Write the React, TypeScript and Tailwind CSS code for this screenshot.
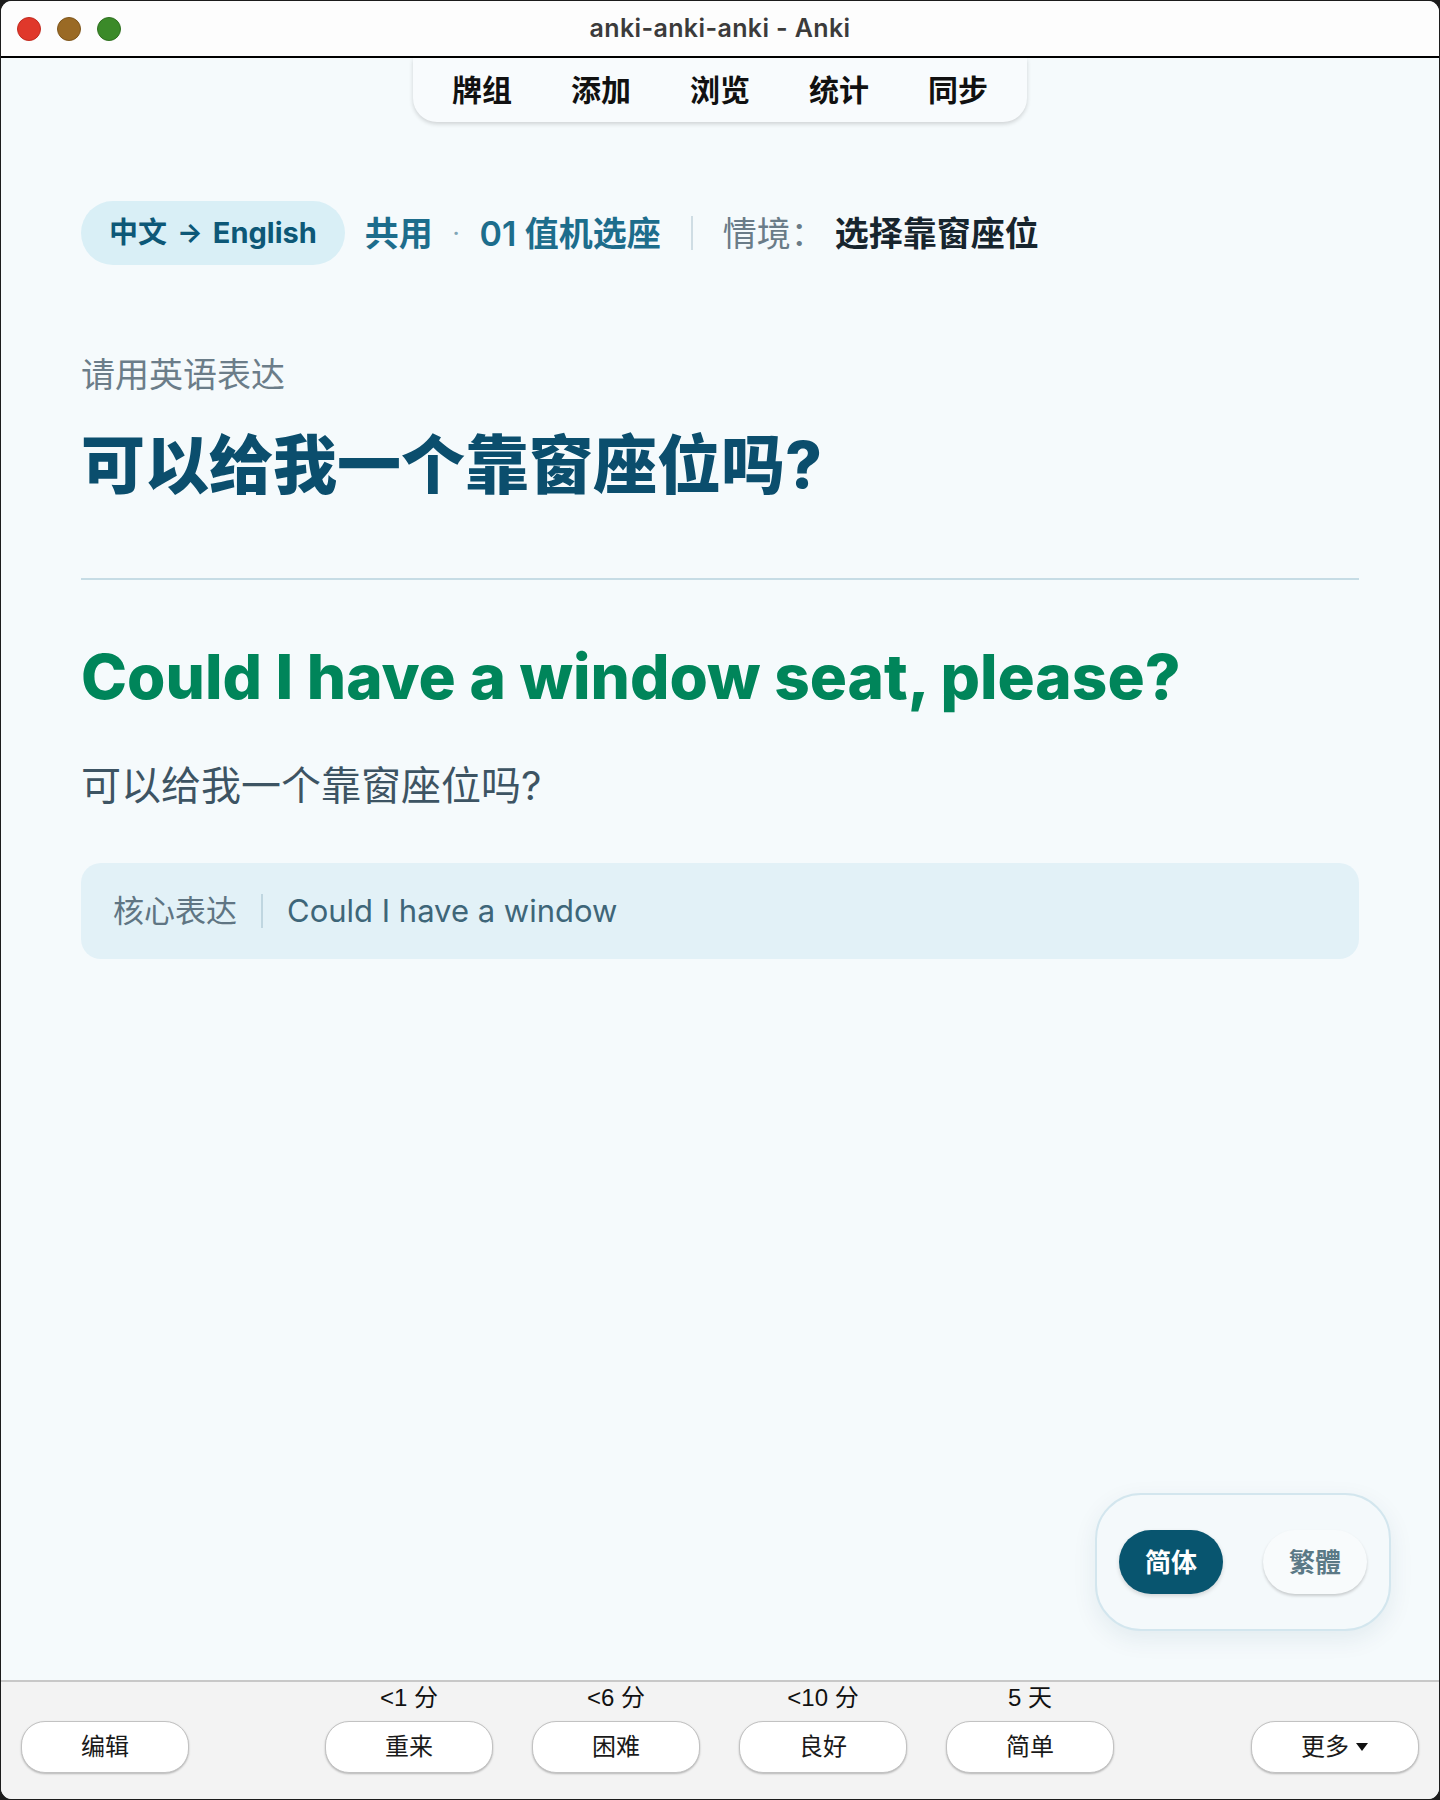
import { ReactNode } from "react";

const tabs = ["牌组", "添加", "浏览", "统计", "同步"];

const answers = [
  { due: "<1 分", label: "重来" },
  { due: "<6 分", label: "困难" },
  { due: "<10 分", label: "良好" },
  { due: "5 天", label: "简单" },
];

const BarButton = ({ children }: { children: ReactNode }) => (
  <button className="flex h-[52px] w-[168px] items-center justify-center gap-[6px] rounded-[24px] border border-[#c2c2c2] bg-white text-[24px] leading-none text-[#1a1a1a] shadow-[0_1px_2px_rgba(0,0,0,0.25)]">
    {children}
  </button>
);

const TrafficLights = () => (
  <div className="absolute left-[16px] top-[16px] flex gap-[16px]">
    <span className="h-[24px] w-[24px] rounded-full border border-[#c22b20] bg-[#e0382b]" />
    <span className="h-[24px] w-[24px] rounded-full border border-[#7f561c] bg-[#9a6a25]" />
    <span className="h-[24px] w-[24px] rounded-full border border-[#2f7020] bg-[#3b8a29]" />
  </div>
);

export default function App() {
  return (
    <div className="min-h-screen bg-[#1c1c1c] p-px font-[Inter,'Noto_Sans_CJK_SC',sans-serif]">
      <div className="flex h-[1798px] flex-col overflow-hidden rounded-[11px] bg-[#f5fafc]">
        {/* title bar */}
        <div className="relative flex h-[57px] shrink-0 items-center justify-center border-b-2 border-black bg-[#fdfdfd]">
          <TrafficLights />
          <span className="text-[25px] font-semibold tracking-[0.015em] text-[#3b3b3b]">anki-anki-anki - Anki</span>
        </div>

        {/* main review area */}
        <div className="relative flex-1">
          <div className="flex justify-center">
            <nav className="flex h-[64px] items-center gap-[59px] rounded-b-[24px] bg-[#f8fbfd] px-[39px] shadow-[0_2px_4px_rgba(0,0,0,0.16)]">
              {tabs.map((t) => (
                <span key={t} className="text-[30px] font-bold leading-none text-[#111]">
                  {t}
                </span>
              ))}
            </nav>
          </div>

          <div className="px-[80px] pt-[79px]">
            {/* breadcrumbs */}
            <div className="flex h-[64px] items-center">
              <span className="flex h-[64px] items-center gap-[10px] rounded-full bg-[#d9eff6] px-[28px] text-[29px] font-bold text-[#0d5877]">
                中文 <span className="text-[27px]">→</span> English
              </span>
              <span className="ml-[20px] text-[34px] font-semibold text-[#1d6d8c]">共用</span>
              <span className="mx-[20px] text-[20px] font-bold text-[#7fa5b6]">·</span>
              <span className="text-[34px] font-semibold text-[#1d6d8c]">01 值机选座</span>
              <span className="mx-[30px] h-[34px] w-[2px] bg-[#cfdde4]" />
              <span className="text-[34px] text-[#6a7c88]">情境：</span>
              <span className="ml-[10px] text-[34px] font-bold text-[#17252e]">选择靠窗座位</span>
            </div>

            <p className="mt-[89px] text-[34px] leading-[42px] text-[#6b7d89]">请用英语表达</p>
            <h1 className="mt-[29px] text-[64px] font-extrabold leading-[80px] text-[#0b4e6d]">
              可以给我一个靠窗座位吗?
            </h1>

            <div className="mt-[73px] h-[2px] bg-[#c6dce5]" />

            <h2 className="mt-[59px] text-[62px] font-extrabold leading-[75px] tracking-normal text-[#00855a]">
              Could I have a window seat, please?
            </h2>
            <p className="mt-[44px] text-[40px] leading-[56px] text-[#3d5463]">可以给我一个靠窗座位吗?</p>

            <div className="mt-[49px] flex h-[96px] items-center rounded-[20px] bg-[#e2f1f7] px-[32px]">
              <span className="text-[31px] text-[#5f7583]">核心表达</span>
              <span className="mx-[24px] h-[34px] w-[2px] bg-[#bfd6e0]" />
              <span className="text-[31px] text-[#3e6679]">Could I have a window</span>
            </div>
          </div>

          {/* script toggle */}
          <div className="absolute bottom-[49px] right-[48px] flex h-[138px] w-[296px] items-center justify-between rounded-[46px] border-2 border-[#d3e6ee] bg-[#f4f9fb] px-[22px] shadow-[0_8px_24px_rgba(10,60,90,0.08)]">
            <button className="flex h-[64px] w-[104px] items-center justify-center rounded-full bg-[#08556f] text-[26px] font-bold text-white shadow-[0_2px_4px_rgba(0,0,0,0.15)]">
              简体
            </button>
            <button className="flex h-[64px] w-[104px] items-center justify-center rounded-full bg-[#f8fbfc] text-[26px] font-bold text-[#5b7986] shadow-[0_2px_3px_rgba(0,0,0,0.18)]">
              繁體
            </button>
          </div>
        </div>

        {/* answer bar */}
        <div className="flex h-[119px] shrink-0 items-end border-t-2 border-[#c8c8c8] bg-[#f3f3f3] px-[20px] pb-[26px] font-['Liberation_Sans','Noto_Sans_CJK_SC',sans-serif]">
          <BarButton>编辑</BarButton>
          <div className="ml-[136px] flex gap-[39px]">
            {answers.map((a) => (
              <div key={a.label} className="flex flex-col items-center">
                <span className="mb-[10px] text-[24px] leading-[27px] text-[#111]">{a.due}</span>
                <BarButton>{a.label}</BarButton>
              </div>
            ))}
          </div>
          <div className="ml-auto">
            <BarButton>
              更多
              <svg width="14" height="10" viewBox="0 0 14 10">
                <path d="M1 1h12L7 9z" fill="#111" />
              </svg>
            </BarButton>
          </div>
        </div>
      </div>
    </div>
  );
}
